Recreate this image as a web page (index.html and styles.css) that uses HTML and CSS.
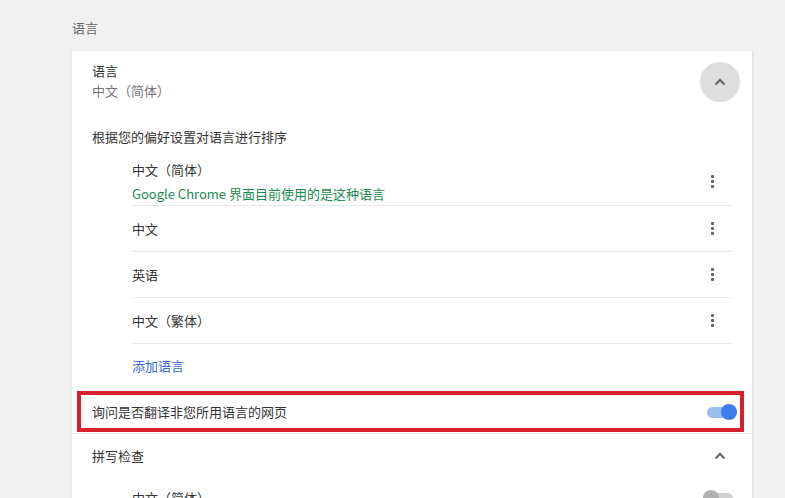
FILE: index.html
```html
<!DOCTYPE html>
<html lang="zh-CN">
<head>
<meta charset="utf-8">
<link rel="stylesheet" href="styles.css">
</head>
<body>
<div class="page">
  <div class="section-title">语言</div>
  <div class="card">
    <div class="header">
      <div class="header-text">
        <div class="primary">语言</div>
        <div class="secondary">中文（简体）</div>
      </div>
      <div class="circle-btn">
        <svg width="12" height="8" viewBox="0 0 12 8"><path d="M1.5 6.5 L6 2 L10.5 6.5" fill="none" stroke="#5f6368" stroke-width="2"/></svg>
      </div>
    </div>
    <div class="sort-label">根据您的偏好设置对语言进行排序</div>
    <div class="lang-list">
      <div class="lang-item first">
        <div class="lang-text">
          <div class="primary">中文（简体）</div>
          <div class="green">Google Chrome 界面目前使用的是这种语言</div>
        </div>
        <div class="dots"><span></span><span></span><span></span></div>
      </div>
      <div class="lang-item">
        <div class="lang-text"><div class="primary">中文</div></div>
        <div class="dots"><span></span><span></span><span></span></div>
      </div>
      <div class="lang-item">
        <div class="lang-text"><div class="primary">英语</div></div>
        <div class="dots"><span></span><span></span><span></span></div>
      </div>
      <div class="lang-item">
        <div class="lang-text"><div class="primary">中文（繁体）</div></div>
        <div class="dots"><span></span><span></span><span></span></div>
      </div>
      <div class="add-lang">添加语言</div>
    </div>
    <div class="translate-row">
      <div class="primary">询问是否翻译非您所用语言的网页</div>
      <div class="toggle on"><div class="track"></div><div class="knob"></div></div>
    </div>
    <div class="spell-row">
      <div class="primary">拼写检查</div>
      <svg class="chev" width="12" height="8" viewBox="0 0 12 8"><path d="M1.5 6.5 L6 2 L10.5 6.5" fill="none" stroke="#5f6368" stroke-width="2"/></svg>
    </div>
    <div class="spell-item">
      <div class="primary">中文（简体）</div>
      <div class="toggle off"><div class="track"></div><div class="knob"></div></div>
    </div>
  </div>
</div>
</body>
</html>
```
FILE: styles.css
```css
* { box-sizing: border-box; }
html, body { margin: 0; padding: 0; }
body {
  background: #f1f1f1;
  font-family: "Microsoft YaHei", "Noto Sans CJK SC", "Liberation Sans", sans-serif;
  font-size: 13px;
  color: #333;
  height: 498px;
  overflow: hidden;
  text-spacing-trim: space-all;
}
.page {
  padding-left: 72px;
  width: 752px;
}
.section-title {
  height: 51px;
  line-height: 20px;
  padding-top: 18px;
  color: #666;
}
.card {
  background: #fff;
  width: 680px;
  box-shadow: 0 0 1px rgba(0,0,0,0.12), 1px 1px 2px rgba(0,0,0,0.08);
}
.primary { line-height: 20px; color: #333; }
.secondary { line-height: 20px; color: #757575; }
.green { line-height: 20px; color: #1e8a4c; margin-top: 4px; }
.header {
  display: flex;
  align-items: center;
  justify-content: space-between;
  padding: 10px 12px 12px 20px;
  height: 62px;
}
.circle-btn {
  width: 40px;
  height: 40px;
  border-radius: 50%;
  background: #dedede;
  display: flex;
  align-items: center;
  justify-content: center;
  margin-top: 2px;
}
.sort-label {
  padding: 14px 20px 13px;
  line-height: 20px;
  height: 47px;
}
.lang-list {
  margin: 0 20px 0 60px;
}
.lang-item {
  display: flex;
  align-items: center;
  justify-content: space-between;
  height: 46px;
  border-bottom: 1px solid #e8e8e8;
}
.lang-item.first { align-items: flex-start; }
.lang-item.first .dots { align-self: center; margin-top: -2px; }
.dots {
  width: 20px;
  display: flex;
  flex-direction: column;
  align-items: center;
  gap: 2px;
  margin-right: 10px;
}
.dots span {
  width: 3px;
  height: 3px;
  background: #5f6368;
  border-radius: 1px;
}
.add-lang {
  height: 45px;
  line-height: 20px;
  padding-top: 12px;
  color: #3367d6;
}
.translate-row {
  display: flex;
  align-items: center;
  justify-content: space-between;
  margin: 2px 8px 0 5px;
  height: 41px;
  border: 4px solid #d71f2e;
  padding: 0 3px 0 11px;
}
.toggle {
  position: relative;
  width: 32px;
  height: 16px;
}
.toggle .track {
  position: absolute;
  left: 2px;
  right: 2px;
  top: 3px;
  height: 11px;
  border-radius: 6px;
}
.toggle .knob {
  position: absolute;
  top: 0;
  width: 16px;
  height: 16px;
  border-radius: 50%;
}
.toggle.on .track { background: #9cbcf2; }
.toggle.on .knob { right: 0; background: #3c7ef0; }
.toggle.off .track { background: #d0d0d0; }
.toggle.off .knob { left: 0; background: #b0b0b0; }
.spell-row {
  display: flex;
  align-items: center;
  justify-content: space-between;
  margin-top: 1px;
  border-top: 1px solid #ececec;
  height: 44px;
  padding: 0 26px 0 20px;
}
.spell-item {
  display: flex;
  align-items: flex-start;
  justify-content: space-between;
  height: 40px;
  margin: 0 17px 0 60px;
  padding-top: 11px;
}
.spell-item .toggle { margin-top: 2px; }
```
